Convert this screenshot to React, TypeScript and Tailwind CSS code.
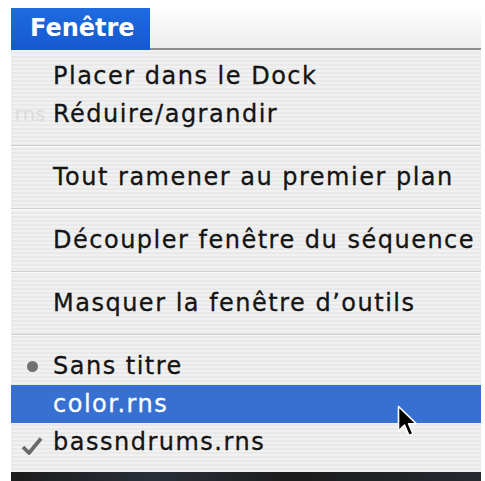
import React from "react";

const Sep = () => (
  <div className="h-[25px] flex items-center">
    <div className="w-full h-px bg-[#cdcdcd] shadow-[0_1px_0_#fafafa]" />
  </div>
);

const Item = ({
  children,
  mark,
  active,
  ghost,
}: {
  children: React.ReactNode;
  mark?: "dot" | "check";
  active?: boolean;
  ghost?: string;
}) => (
  <div
    className={
      "relative h-[38px] flex items-center whitespace-nowrap " +
      (active ? "bg-[#3870d2] text-white" : "text-[#141414]")
    }
  >
    <div className="w-[42px] h-full shrink-0 flex items-center justify-center overflow-hidden">
      {mark === "dot" && (
        <div className="w-[11px] h-[11px] rounded-full bg-[#707070]" />
      )}
      {mark === "check" && (
        <svg width="22" height="18" viewBox="0 0 22 18" className="mt-[7px]">
          <path
            d="M2 10 L8 16 L20 1.5"
            fill="none"
            stroke="#6a6a6a"
            strokeWidth="3.8"
            strokeLinejoin="round"
          />
        </svg>
      )}
      {ghost && (
        <span className="text-[20px] tracking-normal text-[#dcdcdc] [-webkit-text-stroke:0px] ml-[-4px]">
          {ghost}
        </span>
      )}
    </div>
    <span>{children}</span>
    {active && (
      <svg
        width="22"
        height="34"
        viewBox="0 0 22 34"
        className="absolute left-[386px] top-[20px]"
      >
        <path
          d="M1.5 1.5 L1.5 26 L7.5 20 L12 30.5 L16 28.8 L11.6 18.8 L19.5 18.8 Z"
          fill="#000"
          stroke="#fff"
          strokeWidth="1.6"
          strokeLinejoin="round"
        />
      </svg>
    )}
  </div>
);

export default function App() {
  return (
    <div className="w-[485px] h-[481px] bg-white pt-2 pl-[11px] pr-1 font-['DejaVu_Sans',sans-serif] text-[24px] tracking-[1.5px] [-webkit-text-stroke:0.3px] overflow-hidden">
      <div className="flex flex-col h-full">
        <div className="flex h-[42px]">
          <div className="w-[139px] bg-[linear-gradient(180deg,#1f6be0,#1558d0)] text-white font-bold tracking-normal [-webkit-text-stroke:0px] flex items-center pl-[19px] pb-[2px]">
            Fenêtre
          </div>
          <div className="flex-1 bg-[linear-gradient(180deg,#ffffff,#f6f6f6_40%,#ececec)] border-b-2 border-[#8e8e8e]" />
        </div>
        <div className="flex-1 overflow-hidden bg-[image:repeating-linear-gradient(180deg,#f1f1f1_0px,#f1f1f1_2px,#e9e9e9_2px,#e9e9e9_4px)] pt-[7px] pb-[11px]">
          <Item>Placer dans le Dock</Item>
          <Item ghost="rns">Réduire/agrandir</Item>
          <Sep />
          <Item>Tout ramener au premier plan</Item>
          <Sep />
          <Item>Découpler fenêtre du séquence</Item>
          <Sep />
          <Item>Masquer la fenêtre d’outils</Item>
          <Sep />
          <Item mark="dot">Sans titre</Item>
          <Item active>color.rns</Item>
          <Item mark="check">bassndrums.rns</Item>
        </div>
        <div className="h-[9px] bg-[linear-gradient(90deg,#1c1c1c,#2a2f38_30%,#1c1c1c_60%,#262a30)]" />
      </div>
    </div>
  );
}
